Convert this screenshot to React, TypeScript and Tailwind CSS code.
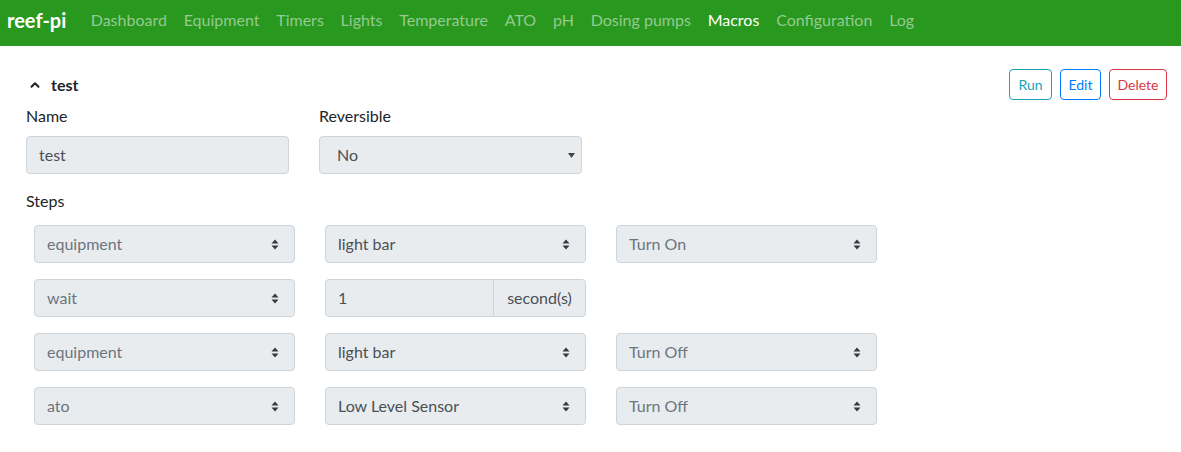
import { ChevronUp } from 'lucide-react';

const navItems = [
  'Dashboard',
  'Equipment',
  'Timers',
  'Lights',
  'Temperature',
  'ATO',
  'pH',
  'Dosing pumps',
  'Macros',
  'Configuration',
  'Log',
];

function UpDown() {
  return (
    <svg width="8" height="11" viewBox="0 0 8 11" className="shrink-0">
      <path d="M4 0.5 L7.5 4.5 H0.5 Z" fill="#343a40" />
      <path d="M4 10.5 L7.5 6.5 H0.5 Z" fill="#343a40" />
    </svg>
  );
}

function StepSelect({ value, muted }: { value: string; muted?: boolean }) {
  return (
    <div
      className={`w-[261px] h-[38px] flex items-center justify-between pl-[12px] pr-[15px] bg-[#e9ecef] border border-[#ced4da] rounded-[4px] text-[16px] ${
        muted ? 'text-[#6c757d]' : 'text-[#495057]'
      }`}
    >
      <span>{value}</span>
      <UpDown />
    </div>
  );
}

export default function App() {
  const steps = [
    { a: 'equipment', b: 'light bar', c: 'Turn On' },
    { a: 'wait', b: '1', c: null },
    { a: 'equipment', b: 'light bar', c: 'Turn Off' },
    { a: 'ato', b: 'Low Level Sensor', c: 'Turn Off' },
  ];

  return (
    <div className="w-[1181px] h-[452px] bg-white font-['Lato','Open_Sans',sans-serif] text-[#212529]">
      {/* Navbar */}
      <nav className="h-[46px] bg-[#28981f] flex items-center pl-[7px] pb-[7px]">
        <span className="text-white font-bold text-[20px] mr-[16px]">reef-pi</span>
        <div className="flex items-center">
          {navItems.map((item) => (
            <span
              key={item}
              className={`px-[8.4px] text-[16px] ${
                item === 'Macros' ? 'text-white' : 'text-[#94cb8f]'
              }`}
            >
              {item}
            </span>
          ))}
        </div>
      </nav>

      {/* Macro */}
      <div className="pl-[26px] pr-[14px] pt-[23px]">
        <div className="flex items-center justify-between h-[31px]">
          <div className="flex items-center gap-[9px] pl-[2px] pt-[1px]">
            <ChevronUp className="w-[14px] h-[14px] text-[#212529]" strokeWidth={3.5} />
            <span className="font-bold text-[16px]">test</span>
          </div>
          <div className="flex items-center gap-[8px]">
            <button className="w-[43px] h-[31px] text-[14px] text-[#17a2b8] border border-[#17a2b8] rounded-[4px]">
              Run
            </button>
            <button className="w-[41px] h-[31px] text-[14px] text-[#007bff] border border-[#007bff] rounded-[4px]">
              Edit
            </button>
            <button className="w-[58px] h-[31px] text-[14px] text-[#dc3545] border border-[#dc3545] rounded-[4px]">
              Delete
            </button>
          </div>
        </div>

        <div className="flex gap-[30px] mt-[4px]">
          <div className="w-[263px]">
            <div className="text-[16px] h-[24px] leading-[24px]">Name</div>
            <div className="mt-[8px] h-[38px] flex items-center pl-[12px] bg-[#e9ecef] border border-[#ced4da] rounded-[4px] text-[16px] text-[#495057]">
              test
            </div>
          </div>
          <div className="w-[263px]">
            <div className="text-[16px] h-[24px] leading-[24px]">Reversible</div>
            <div className="mt-[8px] h-[38px] flex items-center justify-between pl-[17px] pr-[6px] bg-[#e9ecef] border border-[#ced4da] rounded-[4px] text-[16px] text-[#495057]">
              <span>No</span>
              <svg width="7" height="5" viewBox="0 0 7 5">
                <path d="M0 0 H7 L3.5 5 Z" fill="#444" />
              </svg>
            </div>
          </div>
        </div>

        <div className="mt-[15px] text-[16px] h-[24px] leading-[24px]">Steps</div>

        <div className="mt-[12px] pl-[8px] flex flex-col gap-[16px]">
          {steps.map((s, i) => (
            <div key={i} className="flex gap-[30px]">
              <StepSelect value={s.a} muted />
              {s.c === null ? (
                <div className="w-[261px] h-[38px] flex bg-[#e9ecef] border border-[#ced4da] rounded-[4px] text-[16px] text-[#495057]">
                  <div className="flex-1 flex items-center pl-[12px]">{s.b}</div>
                  <div className="w-[92px] flex items-center justify-center border-l border-[#ced4da]">
                    second(s)
                  </div>
                </div>
              ) : (
                <StepSelect value={s.b} />
              )}
              {s.c !== null && <StepSelect value={s.c} muted />}
            </div>
          ))}
        </div>
      </div>
    </div>
  );
}
